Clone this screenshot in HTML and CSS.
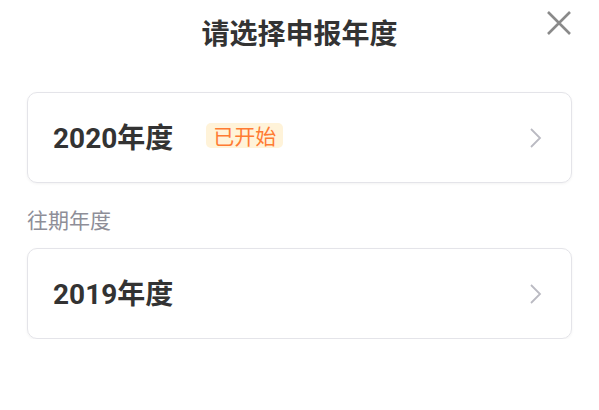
FILE: index.html
```html
<!DOCTYPE html>
<html lang="zh-CN">
<head>
    <meta charset="UTF-8" />
    <title>请选择申报年度</title>
    <link rel="stylesheet" href="styles.css">
</head>
<body>

    <div class="header">
        <h2 class="title">请选择申报年度</h2>
        <button class="btn-close" aria-label="关闭">
            <svg width="26" height="26" viewBox="0 0 26 26">
                <path d="M2 2 L24 24 M24 2 L2 24" stroke="#8a8a8a" stroke-width="2.6" fill="none" />
            </svg>
        </button>
    </div>

    <div class="content">
        <div class="year-card">
            <span class="year-name">2020年度</span>
            <span class="badge">已开始</span>
            <svg class="chevron" width="14" height="22" viewBox="0 0 14 22">
                <path d="M2 2 L11 11 L2 20" stroke="#babac2" stroke-width="1.8" fill="none" />
            </svg>
        </div>

        <p class="section-label">往期年度</p>

        <div class="year-card">
            <span class="year-name">2019年度</span>
            <svg class="chevron" width="14" height="22" viewBox="0 0 14 22">
                <path d="M2 2 L11 11 L2 20" stroke="#babac2" stroke-width="1.8" fill="none" />
            </svg>
        </div>
    </div>

</body>
</html>
```

FILE: styles.css
```css
body {
    margin: 0;
    background-color: #ffffff;
    font-family: "Noto Sans CJK SC", "Noto Sans", Roboto, sans-serif;
    color: #333333;
}

.header {
    position: relative;
    height: 64px;
    display: flex;
    align-items: center;
    justify-content: center;
}

.title {
    margin: 0;
    font-size: 28px;
    font-weight: bold;
    line-height: 64px;
    color: #333333;
}

.btn-close {
    position: absolute;
    top: 10px;
    right: 27px;
    padding: 0;
    border: none;
    background: none;
    cursor: pointer;
    display: flex;
}

.content {
    padding: 28px 27px 0 27px;
}

.year-card {
    display: flex;
    align-items: center;
    height: 89px;
    padding: 0 28px 0 25px;
    border: 1px solid #e4e4e9;
    border-radius: 10px;
    box-shadow: 0 1px 3px rgba(0, 0, 0, 0.05);
}

.year-name {
    font-family: Roboto, "Noto Sans CJK SC", sans-serif;
    font-size: 28px;
    font-weight: bold;
    color: #333333;
    margin-top: -4px;
}

.badge {
    margin-left: 33px;
    margin-top: -4px;
    padding: 0 7px;
    height: 25px;
    line-height: 25px;
    font-size: 21px;
    color: #ff7b33;
    background-color: #fff3d9;
    border-radius: 5px;
}

.chevron {
    margin-left: auto;
}

.section-label {
    margin: 22px 0 15px 0;
    font-size: 21px;
    line-height: 28px;
    color: #8e8e98;
}
```
